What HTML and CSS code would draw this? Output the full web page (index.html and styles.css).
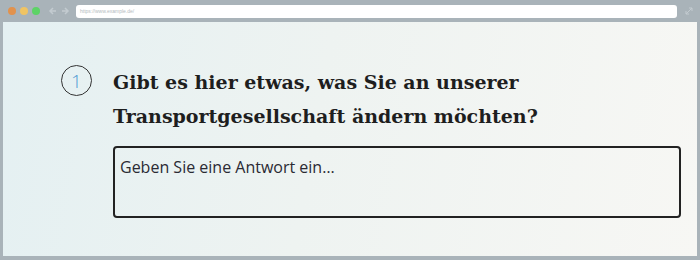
FILE: index.html
```html
<!DOCTYPE html>
<html lang="de">
<head>
<meta charset="utf-8">
<link rel="stylesheet" href="styles.css">
</head>
<body>
<div class="window">
  <div class="toolbar">
    <div class="lights">
      <span class="light red"></span>
      <span class="light yellow"></span>
      <span class="light green"></span>
    </div>
    <div class="nav">
      <svg width="10" height="10" viewBox="0 0 10 10"><path d="M8 5H2M5 2L2 5L5 8" fill="none" stroke="#c3cbd0" stroke-width="1.5"/></svg>
      <svg width="10" height="10" viewBox="0 0 10 10"><path d="M2 5H8M5 2L8 5L5 8" fill="none" stroke="#c3cbd0" stroke-width="1.5"/></svg>
    </div>
    <div class="url">https://www.example.de/</div>
    <svg class="expand" width="10" height="10" viewBox="0 0 10 10"><path d="M2 8L8 2M5 2H8V5M2 5V8H5" fill="none" stroke="#c3cbd0" stroke-width="1"/></svg>
  </div>
  <div class="content">
    <div class="question">
      <div class="num">1</div>
      <div class="body">
        <h1 class="title">Gibt es hier etwas, was Sie an unserer Transportgesellschaft ändern möchten?</h1>
        <div class="answer">Geben Sie eine Antwort ein…</div>
      </div>
    </div>
  </div>
</div>
</body>
</html>
```
FILE: styles.css
```css
html, body { margin: 0; padding: 0; }
body { width: 700px; height: 260px; background: #a9b3b9; overflow: hidden; }
.window { width: 700px; height: 260px; display: flex; flex-direction: column; box-sizing: border-box; padding: 0 3px 4px 3px; }
.toolbar { height: 22px; display: flex; align-items: center; flex-shrink: 0; }
.lights { display: flex; gap: 4px; padding-left: 5px; }
.light { width: 8px; height: 8px; border-radius: 50%; display: block; }
.red { background: #e2924d; }
.yellow { background: #f0c463; }
.green { background: #5dd366; }
.nav { display: flex; gap: 2px; margin-left: 8px; }
.nav svg { display: block; }
.url { margin-left: 6px; width: 601px; height: 13px; background: #fff; border-radius: 3px; font: 5px "Liberation Sans", sans-serif; color: #b5bcc1; line-height: 13px; padding-left: 4px; box-sizing: border-box; }
.expand { margin-left: 7px; display: block; }
.content { flex: 1; background: linear-gradient(100deg, #e4f0f2 0%, #eef3f1 45%, #f7f7f4 100%); }
.question { display: flex; padding: 43px 0 0 58px; }
.num { width: 31px; height: 31px; border: 1px solid #333; border-radius: 50%; box-sizing: border-box; display: flex; align-items: center; justify-content: center; font: 300 19px "Open Sans", sans-serif; color: #4f9ad3; margin-top: 0; flex-shrink: 0; }
.body { margin-left: 21px; width: 568px; }
.title { margin: 0; font: bold 19px/34px "DejaVu Serif", serif; color: #1e1e1e; }
.answer { margin-top: 13px; height: 72px; border: 2px solid #222; border-radius: 4px; box-sizing: border-box; padding: 8px 0 0 5px; font: 16px "Open Sans", sans-serif; color: #2a2a33; }
```
